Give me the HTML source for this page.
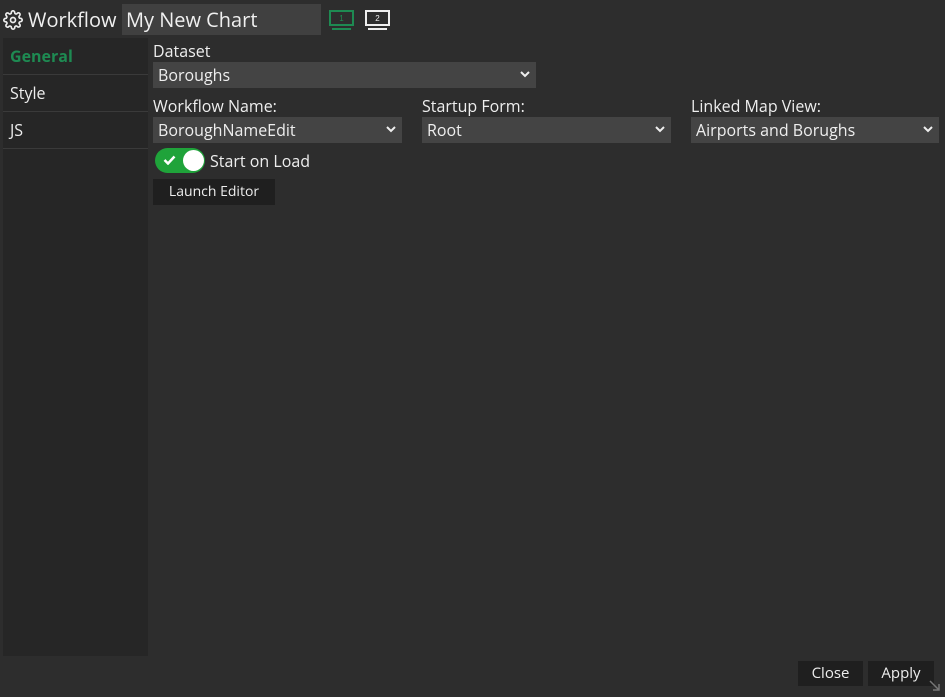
<!DOCTYPE html>
<html><head><meta charset="utf-8"><style>
*{box-sizing:border-box;margin:0;padding:0}
body{width:945px;height:697px;background:#2d2d2d;font-family:"Open Sans","Liberation Sans",sans-serif;color:#eee;position:relative;overflow:hidden}
.abs{position:absolute}
.title{left:28px;top:6px;font-size:20px;color:#f0f0f0}
.name{left:122px;top:4px;width:199px;height:31px;background:#404040;font-size:20px;padding-left:4px;line-height:31px;color:#f0f0f0}
.side{left:3px;top:38px;width:145px;height:618px;background:#262626}
.side div{height:37px;border-bottom:1px solid #3a3a3a;padding-left:7px;line-height:36px;font-size:16px}
.lbl{font-size:16px;color:#eee}
.sel{height:26px;background:#444;font-size:16px;line-height:26px;padding-left:5px;color:#eee}
.sel svg{position:absolute;right:6px;top:9px}
.btn{background:#1f1f1f;font-size:14px;text-align:center;color:#eee}
</style></head><body>
<svg class="abs" style="left:3px;top:10px" width="20" height="20" viewBox="0 0 24 24" fill="none" stroke="#eee" stroke-width="2"><circle cx="12" cy="12" r="3"/><path d="M19.4 15a1.7 1.7 0 0 0 .3 1.8l.1.1a2 2 0 1 1-2.8 2.8l-.1-.1a1.7 1.7 0 0 0-1.8-.3 1.7 1.7 0 0 0-1 1.5V21a2 2 0 1 1-4 0v-.1a1.7 1.7 0 0 0-1.1-1.5 1.7 1.7 0 0 0-1.8.3l-.1.1a2 2 0 1 1-2.8-2.8l.1-.1a1.7 1.7 0 0 0 .3-1.8 1.7 1.7 0 0 0-1.5-1H3a2 2 0 1 1 0-4h.1a1.7 1.7 0 0 0 1.5-1.1 1.7 1.7 0 0 0-.3-1.8l-.1-.1a2 2 0 1 1 2.8-2.8l.1.1a1.7 1.7 0 0 0 1.8.3H9a1.7 1.7 0 0 0 1-1.5V3a2 2 0 1 1 4 0v.1a1.7 1.7 0 0 0 1 1.5 1.7 1.7 0 0 0 1.8-.3l.1-.1a2 2 0 1 1 2.8 2.8l-.1.1a1.7 1.7 0 0 0-.3 1.8V9a1.7 1.7 0 0 0 1.5 1H21a2 2 0 1 1 0 4h-.1a1.7 1.7 0 0 0-1.5 1z"/></svg>
<div class="abs title">Workflow</div>
<div class="abs name">My New Chart</div>
<svg class="abs" style="left:329px;top:10px" width="25" height="20"><rect x="1" y="1" width="23" height="14" fill="none" stroke="#1e8a52" stroke-width="2"/><rect x="3" y="18" width="19" height="2" fill="#1e8a52"/><text x="12.5" y="11" font-size="8" fill="#1e8a52" text-anchor="middle" font-family="Liberation Sans">1</text></svg>
<svg class="abs" style="left:365px;top:10px" width="25" height="20"><rect x="1" y="1" width="23" height="14" fill="none" stroke="#eee" stroke-width="2"/><rect x="3" y="18" width="19" height="2" fill="#eee"/><text x="12.5" y="11" font-size="8" fill="#eee" text-anchor="middle" font-family="Liberation Sans">2</text></svg>
<div class="abs side"><div style="color:#1e8a52;font-weight:bold">General</div><div>Style</div><div>JS</div></div>
<div class="abs lbl" style="left:153px;top:40px">Dataset</div>
<div class="abs sel" style="left:153px;top:62px;width:383px">Boroughs<svg width="10" height="7"><path d="M1 1l4 4 4-4" stroke="#eee" stroke-width="2" fill="none"/></svg></div>
<div class="abs lbl" style="left:153px;top:95px">Workflow Name:</div>
<div class="abs lbl" style="left:422px;top:95px">Startup Form:</div>
<div class="abs lbl" style="left:691px;top:95px">Linked Map View:</div>
<div class="abs sel" style="left:153px;top:117px;width:249px">BoroughNameEdit<svg width="10" height="7"><path d="M1 1l4 4 4-4" stroke="#eee" stroke-width="2" fill="none"/></svg></div>
<div class="abs sel" style="left:422px;top:117px;width:249px">Root<svg width="10" height="7"><path d="M1 1l4 4 4-4" stroke="#eee" stroke-width="2" fill="none"/></svg></div>
<div class="abs sel" style="left:691px;top:117px;width:248px">Airports and Borughs<svg width="10" height="7"><path d="M1 1l4 4 4-4" stroke="#eee" stroke-width="2" fill="none"/></svg></div>
<div class="abs" style="left:155px;top:148px;width:50px;height:25px;border-radius:13px;background:#1fa33a"></div>
<div class="abs" style="left:183px;top:150px;width:21px;height:21px;border-radius:50%;background:#fff"></div>
<svg class="abs" style="left:163px;top:155px" width="13" height="10"><path d="M1.5 5l3.5 3.5 6.5-7" stroke="#fff" stroke-width="2.5" fill="none"/></svg>
<div class="abs lbl" style="left:210px;top:150px">Start on Load</div>
<div class="abs btn" style="left:153px;top:179px;width:122px;height:26px;line-height:26px">Launch Editor</div>
<div class="abs btn" style="left:798px;top:661px;width:65px;height:25px;line-height:25px;font-size:15px">Close</div>
<div class="abs btn" style="left:868px;top:661px;width:66px;height:25px;line-height:25px;font-size:15px">Apply</div>
<svg class="abs" style="left:929px;top:680px" width="12" height="12"><path d="M1 1l9 9M4 10h6V4" stroke="#777" stroke-width="1.5" fill="none"/></svg>
</body></html>
